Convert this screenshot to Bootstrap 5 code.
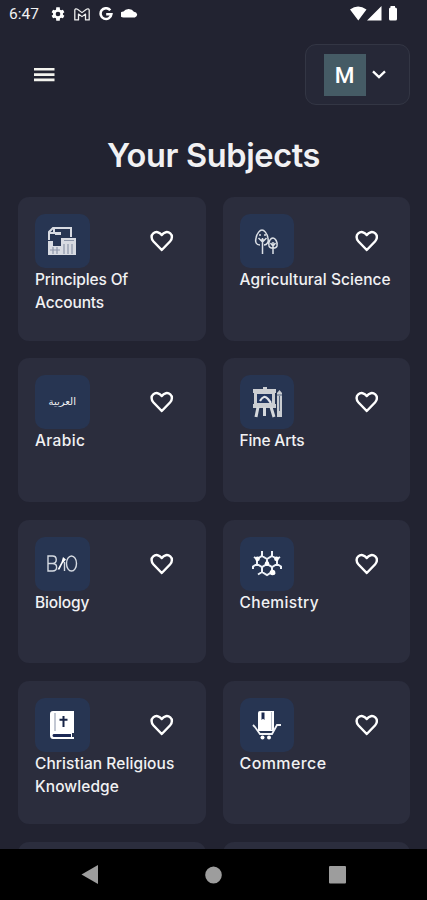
<!DOCTYPE html>
<html lang="en">
<head>
<meta charset="utf-8">
<meta name="viewport" content="width=device-width, initial-scale=1">
<title>Your Subjects</title>
<link href="https://cdn.jsdelivr.net/npm/bootstrap@5.3.0/dist/css/bootstrap.min.css" rel="stylesheet">
<style>
body{background:#222331;color:#f1f1f3;font-family:Inter,"Liberation Sans",sans-serif}
svg{display:block;flex:none}
.screen{height:900px}
.status-bar{height:28px;padding:0 29px 0 9px;font:400 15.5px/28px Roboto,sans-serif}
.status-icons{margin-left:11px;gap:8.5px}
.top-bar{height:92px;padding:16px 17px 0 34px}
.profile-btn{width:105px;height:61px;padding:0 0 0 17.5px;gap:6px;background:#262837;border:1.5px solid #333644;border-radius:11px}
.avatar{width:42px;height:42px;background:#455b65;font:500 22.5px/42px Roboto,sans-serif}
.page-title{font-size:32.5px;line-height:40px;font-weight:600;letter-spacing:-.35px;margin:16px 0 0;height:61px}
.subject-list{padding:0 17px 0 18px}
.subject-row{--bs-gutter-x:17px;--bs-gutter-y:17.7px}
.subject-card{height:143.6px;padding:17px;background:#2b2d3d;border-radius:11px}
.subject-tile{width:54.5px;height:54px;background:#273552;border-radius:10px}
.heart-btn{margin-right:15px}
.subject-name{font-size:15.5px;line-height:23px;font-weight:500;letter-spacing:.08px;margin-right:-12px}
.name-narrow{letter-spacing:-.15px}
.name-mid{letter-spacing:.35px}
.name-wide{font-size:16px;letter-spacing:.4px}
.arabic-word{font:10px/1 "DejaVu Sans",sans-serif}
.system-nav{height:51px;padding:0 81px}
</style>
</head>
<body>
<svg width="0" height="0" class="position-absolute">
<symbol id="heart" viewBox="0 0 24 22"><path d="M12 20.2 3.6 11.5C.9 8.5 1.1 5 3.3 3.2 6 .9 9.700 1.700 12 4.900 14.300 1.700 18 .9 20.700 3.200 22.900 5 23.100 8.500 20.400 11.500Z" fill="none" stroke="#fff" stroke-width="2.500" stroke-linejoin="round"/></symbol>
</svg>
<div class="screen d-flex flex-column overflow-hidden">
<div class="status-bar d-flex align-items-center justify-content-between flex-shrink-0">
 <div class="d-flex align-items-center"><span>6:47</span>
  <div class="status-icons d-flex align-items-center">
   <svg width="16" height="16" viewBox="0 0 24 24" fill="#fff"><path fill-rule="evenodd" d="M19.400 13a8 8 0 0 0 0-2l2.200-1.700-2.200-3.800-2.700 1a8 8 0 0 0-1.700-1L14.600 2H9.400L9 5.500a8 8 0 0 0-1.700 1l-2.700-1-2.200 3.800L4.600 11a8 8 0 0 0 0 2l-2.200 1.700 2.200 3.800 2.700-1a8 8 0 0 0 1.700 1l.4 3.500h5.200l.4-3.500a8 8 0 0 0 1.700-1l2.700 1 2.200-3.800zM12 8.500a3.500 3.500 0 1 1 0 7 3.500 3.500 0 0 1 0-7z"/></svg>
   <svg width="16" height="13" viewBox="0 0 16 14" preserveAspectRatio="none" fill="none" stroke="#eee" stroke-width="1.300" stroke-linejoin="round"><path d="M.8 2.300C.8.8 2.400.4 3.500 1.400L8 5l4.500-3.600c1.100-1 2.700-.6 2.700.9v10.500h-3.700V6.500L8 9.300 4.500 6.500v6.300H.8z"/></svg>
   <svg width="14" height="14" viewBox="0 0 15 15" fill="none" stroke="#fff" stroke-width="2.700"><path d="M12.100 3.500A5.800 5.800 0 1 0 13.300 7.700H7.700"/></svg>
   <svg class="mb-1" width="17" height="11" viewBox="1 0 14.500 11" preserveAspectRatio="none" fill="#fff"><path d="M3.500 10.500a3 3 0 0 1-.4-6A5 5 0 0 1 12 4.700a3 3 0 0 1 .8 5.800z"/></svg>
  </div>
 </div>
 <svg width="49" height="18" viewBox="0 0 49 18" fill="#fff"><path d="M1 4.500Q9-1.500 17.500 4.500L9.300 15.500zM32.500 1v14.500H18zM40 4q0-1.500 1.500-1.500V1h4.500v1.500Q48 2.500 48 4v10q0 1.500-1.500 1.500h-5Q40 15.500 40 14z"/></svg>
</div>
<header class="top-bar d-flex align-items-start justify-content-between flex-shrink-0">
 <button class="btn p-0 border-0 mt-4" aria-label="Menu"><svg width="21" height="15" viewBox="0 0 21 15" fill="#f3f3ee"><path d="M0 0h20.500v2.600H0zM0 5.300h20.500v2.600H0zM0 10.600h20.500v2.600H0z"/></svg></button>
 <button class="profile-btn d-flex align-items-center text-white" aria-label="Profile"><span class="avatar text-center">M</span><svg width="14" height="9" viewBox="0 0 14 9" fill="none" stroke="#fff" stroke-width="2.300"><path d="m1 1.300 6 5.800 6-5.800"/></svg></button>
</header>
<h1 class="page-title text-center flex-shrink-0">Your Subjects</h1>
<main class="subject-list flex-grow-1 overflow-hidden">
<div class="row subject-row mt-0">
 <div class="col-6 mt-0"><div class="subject-card"><div class="d-flex align-items-center justify-content-between"><div class="subject-tile d-flex align-items-center justify-content-center">
  <svg width="32" height="32" viewBox="0 0 32 32"><path d="M3 15V7l4-4h18v9M3 8h5V3" fill="none" stroke="#d8dbe2" stroke-width="2"/><path d="M9 7h6v3H9z" fill="#d8dbe2"/><path d="M2 16h5v5h8v-8h15v17H2z" fill="#d8dbe2"/><path d="M18 15.500h10M4 25h10M7 22v7M11 22v7M18 19v10M22 19v10M26 19v10" stroke="#8d96a9" stroke-width="1.200"/></svg>
 </div><svg class="heart-btn" width="23.500" height="22"><use href="#heart"/></svg></div><div class="subject-name name-narrow">Principles Of<br>Accounts</div></div></div>
 <div class="col-6 mt-0"><div class="subject-card"><div class="d-flex align-items-center justify-content-between"><div class="subject-tile d-flex align-items-center justify-content-center">
  <svg width="30" height="30" viewBox="0 0 30 30" fill="none" stroke="#dce0e6" stroke-width="1.500"><path d="M8 19C4 19 3 16 4 12 5 7 8 4 10 4s5 3 6 8c1 4-1 7-4 7M10.500 12v16M6.500 12l4 4 4-4M7 9h2M12 9h2M8 14h5M17 20c-1-5 2-8 4-8s5 4 4 8c-1 3-7 3-8 0M21 16v12M18.500 17l2.500 3 2.500-3"/></svg>
 </div><svg class="heart-btn" width="23.500" height="22"><use href="#heart"/></svg></div><div class="subject-name">Agricultural Science</div></div></div>
 <div class="col-6"><div class="subject-card"><div class="d-flex align-items-center justify-content-between"><div class="subject-tile d-flex align-items-center justify-content-center"><span class="arabic-word" lang="ar">العربية</span></div><svg class="heart-btn" width="23.500" height="22"><use href="#heart"/></svg></div><div class="subject-name name-mid">Arabic</div></div></div>
 <div class="col-6"><div class="subject-card"><div class="d-flex align-items-center justify-content-between"><div class="subject-tile d-flex align-items-center justify-content-center">
  <svg width="32" height="32" viewBox="0 0 32 32"><path d="M2 3h10V1h4v2h9v4h-1v11h1v4H2v-4h1V7H2z" fill="#cbced2"/><path d="M6 8h15v9H6z" fill="#24375f"/><path d="M9 15q4-7 8-2l3 4" stroke="#e0e3e8" stroke-width="2.200" fill="none"/><path d="M7 21 5 31M13.500 21v9M20 21l3 10" stroke="#d5d8dc" stroke-width="3"/><path d="M26 7 28.500 4 31 7v24h-5z" fill="#c8ccd1"/><path d="M26 9h5M28.500 10v15" stroke="#55657f"/></svg>
 </div><svg class="heart-btn" width="23.500" height="22"><use href="#heart"/></svg></div><div class="subject-name name-narrow">Fine Arts</div></div></div>
 <div class="col-6"><div class="subject-card"><div class="d-flex align-items-center justify-content-between"><div class="subject-tile d-flex align-items-center justify-content-center">
  <svg width="32" height="20" viewBox="0 0 32 20"><g fill="none" stroke="#d5dae2" stroke-width="1.400"><path d="M2 2v15h4.500c5.500 0 5.500-7.500 0-7.500H2h4.500c5 0 5-7.500 0-7.500z"/><ellipse cx="25.500" cy="9.500" rx="5" ry="7.500"/><path d="M18.500 17V8"/></g><path d="m11.500 15.500 4-7.500 1.500-5 3 2.500-3.500 4-3 6z" fill="#fff"/></svg>
 </div><svg class="heart-btn" width="23.500" height="22"><use href="#heart"/></svg></div><div class="subject-name name-narrow">Biology</div></div></div>
 <div class="col-6"><div class="subject-card"><div class="d-flex align-items-center justify-content-between"><div class="subject-tile d-flex align-items-center justify-content-center">
  <svg width="30" height="28" viewBox="0 0 30 28"><path d="m10 6 5 3v5l-5 3-5-3V9zm10 0 5 3v5l-5 3-5-3V9zm-10 11 5-3 5 3v5l-5 3-5-3zM10 6V1m10 5V1M5 9 2 7m23 2 3-2M5 14l-4 2.500V19m24-5 4 2.500V19m-19 3-4 2.500M20 22l3 2" fill="none" stroke="#edf1f7" stroke-width="2"/><g fill="#fff"><circle cx="5.500" cy="8.800" r="2.400"/><circle cx="15" cy="13.500" r="2.200"/><circle cx="24.500" cy="8.800" r="2.400"/><circle cx="20.500" cy="22.500" r="2.800"/></g></svg>
 </div><svg class="heart-btn" width="23.500" height="22"><use href="#heart"/></svg></div><div class="subject-name name-mid">Chemistry</div></div></div>
 <div class="col-6"><div class="subject-card"><div class="d-flex align-items-center justify-content-between"><div class="subject-tile d-flex align-items-center justify-content-center">
  <svg width="26" height="30" viewBox="0 0 26 30"><path d="M4 1h21v22h-2v4h2v2H4q-3 0-3-4V4q0-3 3-3z" fill="#fff"/><path d="M4.500 24H22v3H4.500q-2-1.500 0-3z" fill="#1c2955"/><path d="M6 3v18" stroke="#8791a7"/><path d="M14.500 6v11M10.500 9.800h8" stroke="#172447" stroke-width="2"/></svg>
 </div><svg class="heart-btn" width="23.500" height="22"><use href="#heart"/></svg></div><div class="subject-name">Christian Religious<br>Knowledge</div></div></div>
 <div class="col-6"><div class="subject-card"><div class="d-flex align-items-center justify-content-between"><div class="subject-tile d-flex align-items-center justify-content-center">
  <svg width="30" height="30" viewBox="0 0 30 30"><path d="M6 3q0-2 2-2h14v20H6z" fill="#fff"/><path d="M9.500 2.500h3V10L11 8.800 9.500 10z" fill="#1a294e"/><path d="M19.500 2v18" stroke="#b8bfca"/><path d="m1 15 2 2 5 7h12l5-9h4" fill="none" stroke="#f1f3f6" stroke-width="1.800"/><circle cx="10.500" cy="27.500" r="2" fill="#fff"/><circle cx="17" cy="27.500" r="2" fill="#fff"/></svg>
 </div><svg class="heart-btn" width="23.500" height="22"><use href="#heart"/></svg></div><div class="subject-name name-wide">Commerce</div></div></div>
 <div class="col-6"><div class="subject-card"></div></div>
 <div class="col-6"><div class="subject-card"></div></div>
</div>
</main>
<nav class="system-nav bg-black d-flex align-items-center justify-content-between flex-shrink-0">
 <svg width="17" height="19" viewBox="0 0 17 19" fill="#9d9d9d"><path d="M17 0v19L.5 9.500z"/></svg>
 <svg width="17" height="18" viewBox="0 0 17 18" fill="#9d9d9d"><ellipse cx="8.500" cy="9" rx="8.300" ry="8.600"/></svg>
 <svg width="17" height="18" viewBox="0 0 17 18"><rect width="17" height="17.500" rx="1" fill="#9d9d9d"/></svg>
</nav>
</div>
<script src="https://cdn.jsdelivr.net/npm/bootstrap@5.3.0/dist/js/bootstrap.bundle.min.js"></script>
</body>
</html>
